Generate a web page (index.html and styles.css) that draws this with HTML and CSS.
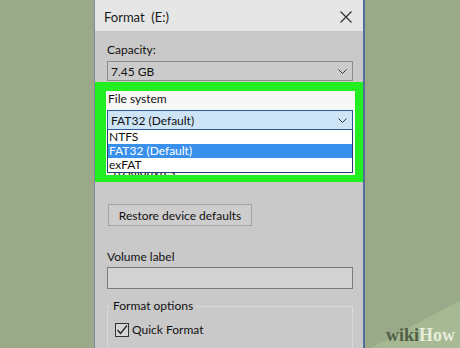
FILE: index.html
```html
<!DOCTYPE html>
<html lang="en">
<head>
    <meta charset="UTF-8">
    <title>Format (E:)</title>
    <link rel="stylesheet" href="styles.css">
</head>
<body>
    <div class="dialog">
        <div class="titlebar">
            <span class="title">Format&nbsp; (E:)</span>
            <svg class="close" width="12" height="12" viewBox="0 0 12 12">
                <path d="M0.5 0.5 L11.5 11.5 M11.5 0.5 L0.5 11.5" stroke="#2b2b2b" stroke-width="1.1" fill="none"/>
            </svg>
        </div>

        <div class="label capacity-label">Capacity:</div>
        <div class="combo capacity">
            <span>7.45 GB</span>
            <svg class="chevron" width="9" height="5" viewBox="0 0 9 5"><path d="M0.5 0.5 L4.5 4.5 L8.5 0.5" stroke="#333" fill="none"/></svg>
        </div>

        <div class="highlight">
            <div class="panel">
                <div class="label">File system</div>
                <div class="dropdown">
                    <div class="combo open">
                        <span>FAT32 (Default)</span>
                        <svg class="chevron" width="9" height="5" viewBox="0 0 9 5"><path d="M0.5 0.5 L4.5 4.5 L8.5 0.5" stroke="#333" fill="none"/></svg>
                    </div>
                    <ul class="options">
                        <li>NTFS</li>
                        <li class="selected">FAT32 (Default)</li>
                        <li>exFAT</li>
                    </ul>
                </div>
                <div class="behind-value">16 kilobytes</div>
            </div>
        </div>

        <button class="restore">Restore device defaults</button>

        <div class="label volume-label">Volume label</div>
        <div class="textbox"></div>

        <fieldset class="group">
            <legend>Format options</legend>
            <label class="check">
                <span class="box">
                    <svg width="12" height="12" viewBox="0 0 12 12"><path d="M1.5 6 L4.5 9.5 L11 1.5" stroke="#1a1a1a" stroke-width="1.2" fill="none"/></svg>
                </span>
                Quick Format
            </label>
        </fieldset>
    </div>

    <div class="logo"><span class="wiki">wiki</span><span class="how">How</span></div>
</body>
</html>
```

FILE: styles.css
```css
body {
    margin: 0;
    height: 348px;
    overflow: hidden;
    position: relative;
    font-family: 'Lato', sans-serif;
    font-size: 12px;
    color: #111;
    background-color: #99a989;
    background-image: linear-gradient(152deg, #99a989 0%, #99a989 92%, #a5b891 92%, #a8bb94 100%);
}

.dialog {
    margin-left: 94px;
    width: 268px;
    height: 348px;
    background-color: #c9c9c9;
    border-left: 1px solid #7f8a96;
    border-right: 2px solid #4f7196;
}

.titlebar {
    height: 31px;
    box-sizing: border-box;
    padding: 3px 11px 0 9px;
    background-color: #e6e6e6;
    display: flex;
    align-items: center;
    justify-content: space-between;
}

.title {
    font-size: 13px;
    color: #1a1a1a;
}

.label {
    line-height: 16px;
    margin-left: 12px;
}

.capacity-label {
    margin-top: 11px;
}

.combo {
    height: 20px;
    box-sizing: border-box;
    margin: 3px 10px 0 12px;
    padding: 0 4px 0 3px;
    border: 1px solid #8d8d8d;
    background-color: #cbcbcb;
    display: flex;
    align-items: center;
    justify-content: space-between;
    font-size: 12px;
}

.chevron {
    margin-right: 1px;
}

.highlight {
    margin-top: 1px;
    height: 100px;
    box-sizing: border-box;
    padding: 9px 8px 7px 11px;
    background-color: #22ee22;
}

.panel {
    height: 84px;
    box-sizing: border-box;
    padding: 0 2px 0 1px;
    background-color: #f7f7f7;
    overflow: hidden;
}

.panel .label {
    margin-left: 1px;
}

.dropdown {
    position: relative;
}

.combo.open {
    margin: 3px 0 0 0;
    background-color: #cde4f7;
    border-color: #2a5a9a;
}

.options {
    position: absolute;
    top: 100%;
    left: 0;
    right: 0;
    margin: 0;
    padding: 0;
    list-style: none;
    background-color: #fff;
    border: 1px solid #27406e;
    border-top: none;
    font-size: 12px;
    z-index: 2;
}

.options li {
    height: 14px;
    line-height: 14px;
    padding-left: 1px;
}

.options .selected {
    background-color: #3890ec;
    color: #fff;
}

.behind-value {
    margin: 34px 0 0 4px;
    line-height: 16px;
}

.restore {
    display: block;
    margin: 22px 0 0 13px;
    width: 144px;
    height: 22px;
    padding: 0;
    border: 1px solid #a4a4a4;
    background-color: #cdcdcd;
    font-family: inherit;
    font-size: 12px;
    white-space: nowrap;
    color: #111;
}

.volume-label {
    margin-top: 23px;
}

.textbox {
    margin: 2px 10px 0 12px;
    height: 22px;
    box-sizing: border-box;
    border: 1px solid #7a7a7a;
    background-color: #d3d3d3;
}

.group {
    margin: 9px 10px 0 12px;
    padding: 0 8px 20px 2px;
    border: 1px solid #dadada;
}

.group legend {
    padding: 0 3px;
    line-height: 16px;
}

.check {
    display: flex;
    align-items: center;
    gap: 3px;
    margin: 8px 0 0 5px;
    font-size: 12px;
}

.box {
    width: 14px;
    height: 14px;
    box-sizing: border-box;
    border: 1px solid #333;
    background-color: #d4d4d4;
    display: flex;
    align-items: center;
    justify-content: center;
}

.logo {
    position: absolute;
    right: 5px;
    bottom: 2px;
    font-family: 'Liberation Serif', serif;
    font-weight: bold;
    font-size: 18px;
}

.wiki {
    color: #4f5e45;
}

.how {
    color: #e6eedc;
}
```
